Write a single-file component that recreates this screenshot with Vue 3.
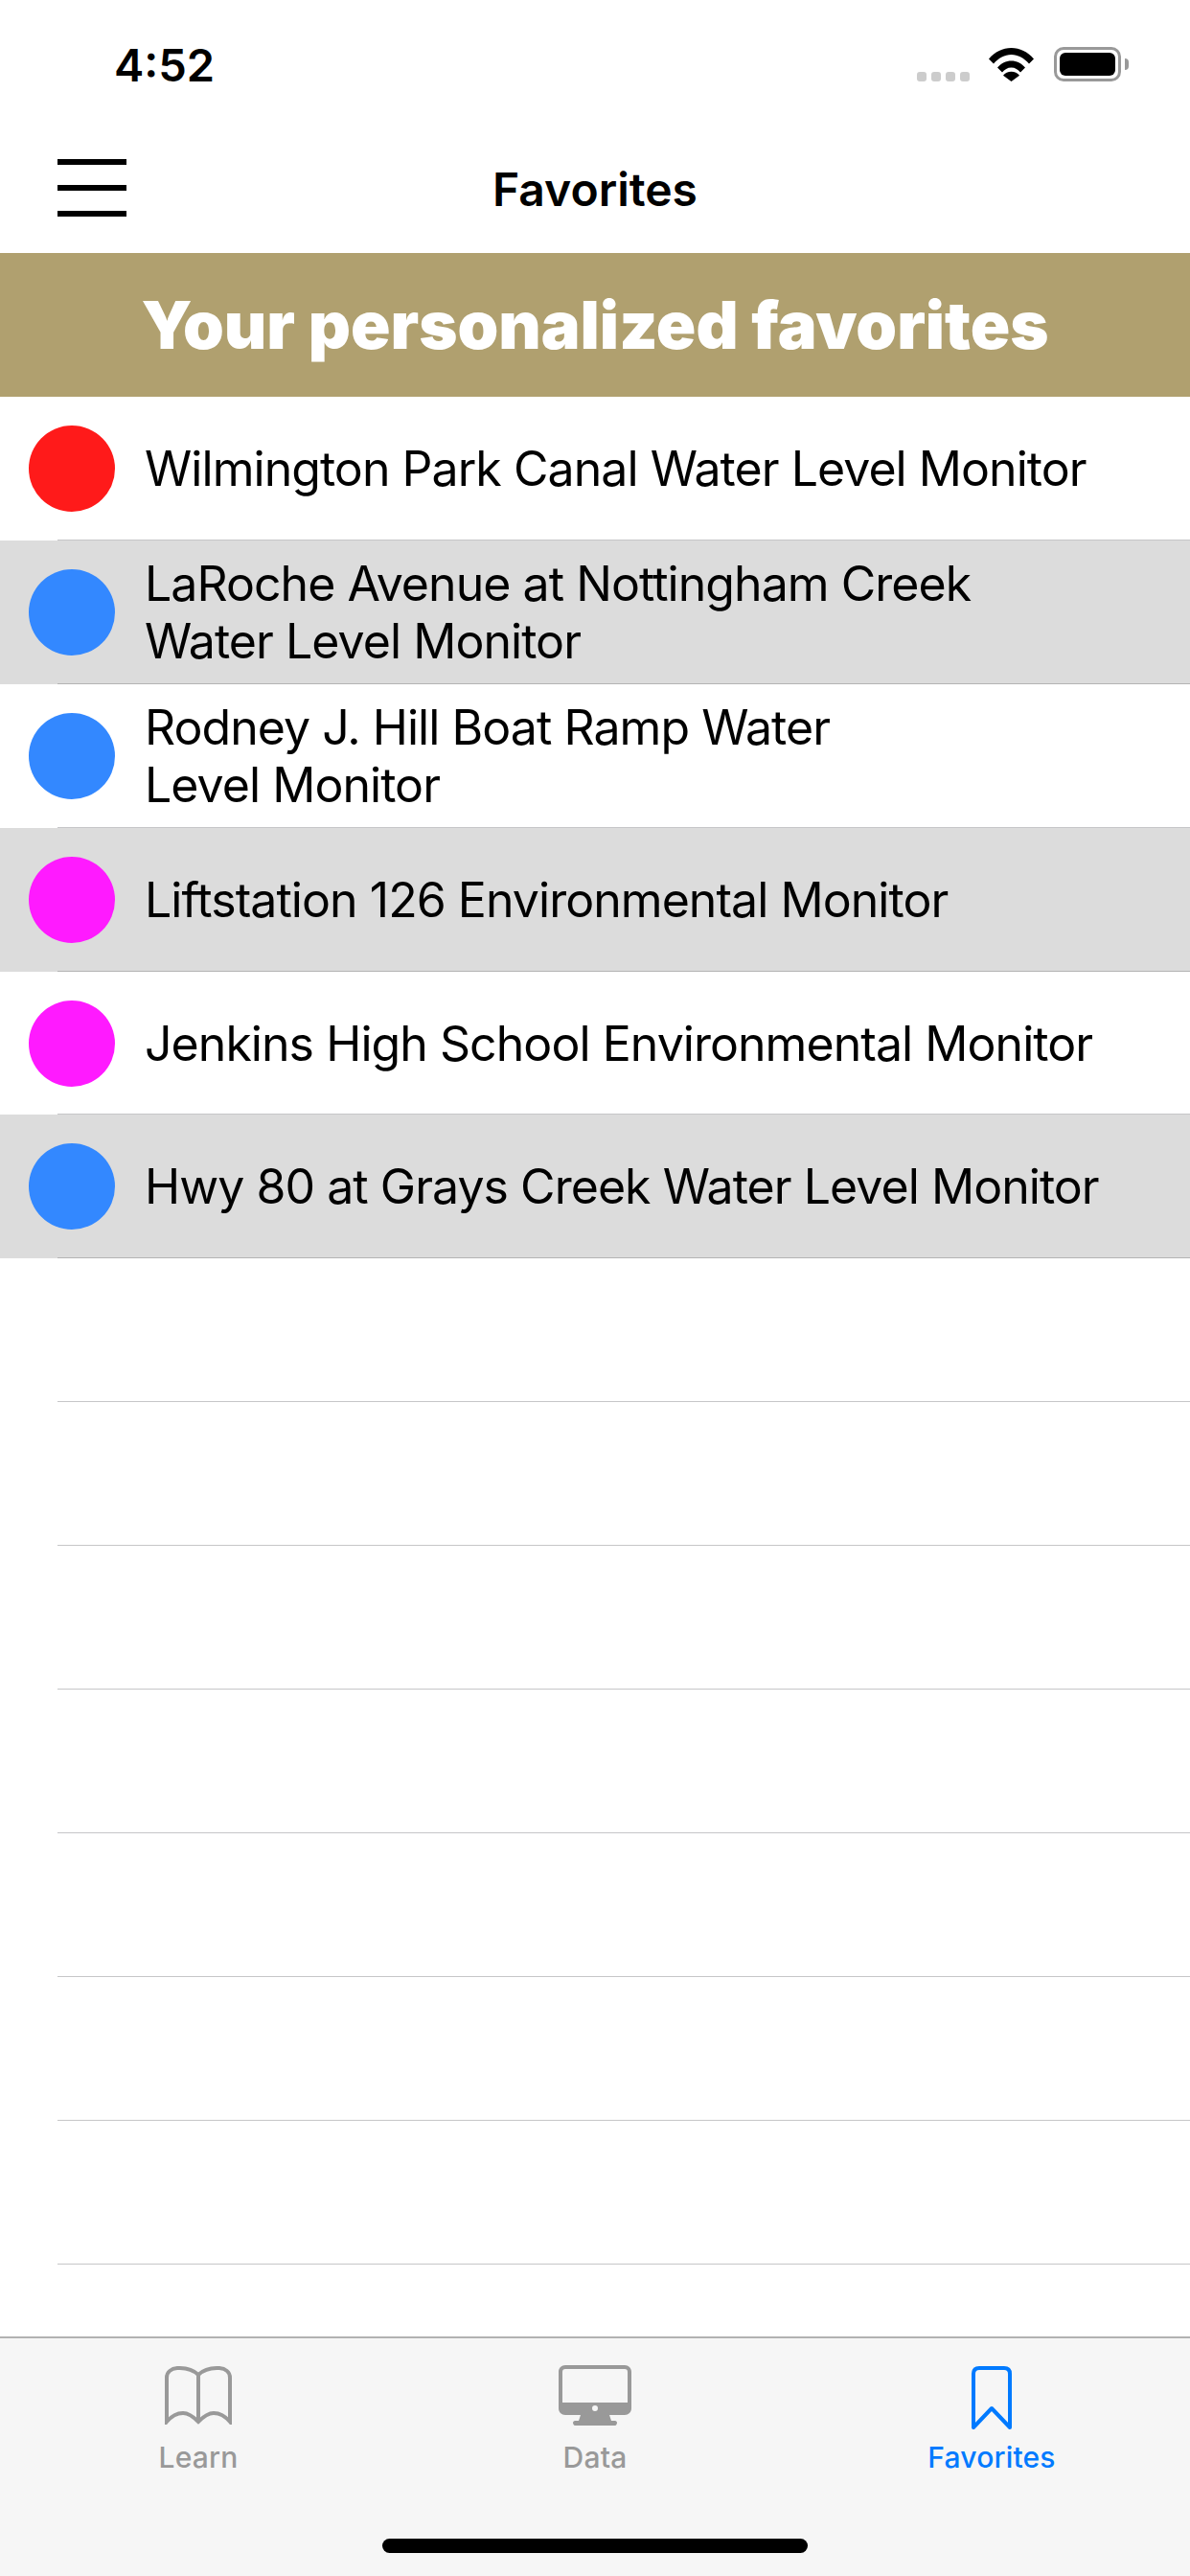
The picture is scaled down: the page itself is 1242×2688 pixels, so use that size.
<script setup>
const monitors = [
  { lines: ['Wilmington Park Canal Water Level Monitor'], color: '#ff1a1a' },
  { lines: ['LaRoche Avenue at Nottingham Creek', 'Water Level Monitor'], color: '#3388ff' },
  { lines: ['Rodney J. Hill Boat Ramp Water', 'Level Monitor'], color: '#3388ff' },
  { lines: ['Liftstation 126 Environmental Monitor'], color: '#ff1aff' },
  { lines: ['Jenkins High School Environmental Monitor'], color: '#ff1aff' },
  { lines: ['Hwy 80 at Grays Creek Water Level Monitor'], color: '#3388ff' }
]
const emptyRows = 8
</script>

<template>
  <div class="screen">
    <div class="status-bar">
      <span class="time">4:52</span>
      <div class="status-icons">
        <div class="signal"><i></i><i></i><i></i><i></i></div>
        <svg class="wifi" width="47" height="36" viewBox="0 0 47 36">
          <path d="M0 12.5C6.5 5 14.5 1 23.5 1S40.500 5 47 12.500L42 17.500C36.500 11.500 30.500 8 23.500 8S10.500 11.500 5 17.500Z" fill="#000"/>
          <path d="M9 21.500C13 17 18 14.500 23.500 14.500S34 17 38 21.500L33 26.500C30.500 23.500 27.500 21.500 23.500 21.500S16.500 23.500 14 26.500Z" fill="#000"/>
          <path d="M23.500 36L15 29.800C17 27.300 20 25.800 23.500 25.800S30 27.300 32 29.800Z" fill="#000"/>
        </svg>
        <div class="battery"><div class="battery-fill"></div></div>
      </div>
    </div>

    <div class="nav-bar">
      <div class="menu-icon"><span></span><span></span><span></span></div>
      <span class="nav-title">Favorites</span>
    </div>

    <div class="banner">Your personalized favorites</div>

    <div class="list">
      <div
        v-for="(m, i) in monitors"
        :key="i"
        class="row"
        :class="{ shaded: i % 2 === 1 }"
      >
        <span class="dot" :style="{ background: m.color }"></span>
        <div class="name">
          <span v-for="line in m.lines" :key="line" class="name-line">{{ line }}</span>
        </div>
      </div>
      <div v-for="n in emptyRows" :key="n" class="row"></div>
    </div>

    <div class="tab-bar">
      <div class="tabs">
        <div class="tab">
          <svg class="tab-icon" width="72" height="62" viewBox="0 0 72 62" fill="none" stroke="#999" stroke-width="4">
            <path d="M36 10C30 4 22 2.500 14 3C8 3.500 3 7 3 13V59C9 52 14 50 20 50C26 50 31 54 36 59C41 54 46 50 52 50C58 50 63 52 69 59V13C69 7 64 3.500 58 3C50 2.500 42 4 36 10V59"/>
          </svg>
          <span class="tab-label">Learn</span>
        </div>
        <div class="tab">
          <svg class="tab-icon" width="76" height="64" viewBox="0 0 76 64">
            <path fill-rule="evenodd" fill="#999" d="M7 0H69C73 0 76 3 76 7V45C76 49 73 52 69 52H53L55 58H59C60 58 61 59 61 60S60 63 59 63H17C16 63 15 61 15 60S16 58 17 58H21L23 52H7C3 52 0 49 0 45V7C0 3 3 0 7 0ZM7 4C5 4 4 5 4 7V39H72V7C72 5 71 4 69 4ZM38 42A3 3 0 1 0 38 48A3 3 0 1 0 38 42Z"/>
          </svg>
          <span class="tab-label">Data</span>
        </div>
        <div class="tab active">
          <svg class="tab-icon" width="44" height="68" viewBox="0 0 44 68" fill="none" stroke="#007aff" stroke-width="4">
            <path d="M3 65V9C3 5 5 3 9 3H35C39 3 41 5 41 9V65L22 45Z" stroke-linejoin="round"/>
          </svg>
          <span class="tab-label">Favorites</span>
        </div>
      </div>
      <div class="home-indicator"></div>
    </div>
  </div>
</template>

<style>
html,
body {
  margin: 0;
  background: #fff;
}
</style>

<style scoped>
.screen {
  width: 1242px;
  height: 2688px;
  display: flex;
  flex-direction: column;
  overflow: hidden;
  font-family: Inter, "Liberation Sans", sans-serif;
  color: #000;
  background: #fff;
}

.status-bar {
  height: 132px;
  flex: none;
  box-sizing: border-box;
  padding: 43px 72px 0 119px;
  display: flex;
  justify-content: space-between;
  align-items: flex-start;
}

.time {
  font-size: 47px;
  line-height: 50px;
  font-weight: 600;
}

.status-icons {
  display: flex;
  align-items: flex-start;
  padding-top: 6px;
}

.signal {
  display: flex;
  gap: 5px;
  margin-top: 26px;
  margin-right: 20px;
}

.signal i {
  width: 10px;
  height: 10px;
  border-radius: 3px;
  background: #ccc;
}

.wifi {
  margin-right: 21px;
}

.battery {
  position: relative;
  width: 70px;
  height: 36px;
  box-sizing: border-box;
  border: 3px solid #999;
  border-radius: 10px;
  padding: 3px;
}

.battery::after {
  content: "";
  position: absolute;
  right: -11px;
  top: 9px;
  width: 4px;
  height: 12px;
  background: #999;
  border-radius: 0 4px 4px 0;
}

.battery-fill {
  height: 100%;
  background: #000;
  border-radius: 6px;
}

.nav-bar {
  height: 132px;
  flex: none;
  position: relative;
  display: flex;
  align-items: center;
  justify-content: center;
}

.menu-icon {
  position: absolute;
  left: 60px;
  top: 34px;
  width: 72px;
  display: flex;
  flex-direction: column;
  gap: 21px;
}

.menu-icon span {
  height: 6px;
  background: #000;
}

.nav-title {
  font-size: 48px;
  font-weight: 600;
  line-height: 60px;
}

.banner {
  height: 150px;
  flex: none;
  display: flex;
  align-items: center;
  justify-content: center;
  background: #b0a06f;
  color: #fff;
  font-size: 68.5px;
  font-weight: 900;
}

.list {
  flex: 1;
  min-height: 0;
  overflow: hidden;
}

.row {
  height: 149.9px;
  box-sizing: border-box;
  position: relative;
  display: flex;
  align-items: center;
  padding-left: 30px;
  gap: 31px;
}

.row::after {
  content: "";
  position: absolute;
  left: 60px;
  right: 0;
  bottom: 0;
  height: 1px;
  background: #c6c6c8;
}

.row.shaded {
  background: #dcdcdc;
}

.row.shaded::after {
  background: #b4b4b4;
}

.dot {
  width: 90px;
  height: 90px;
  border-radius: 50%;
  flex: none;
}

.name {
  font-size: 50px;
  line-height: 60px;
  letter-spacing: -0.95px;
}

.name-line {
  display: block;
  white-space: nowrap;
}

.tab-bar {
  height: 250px;
  flex: none;
  box-sizing: border-box;
  background: #f6f6f6;
  border-top: 2px solid #b2b2b2;
  position: relative;
}

.tabs {
  display: grid;
  grid-template-columns: repeat(3, 1fr);
}

.tab {
  height: 150px;
  position: relative;
  display: flex;
  flex-direction: column;
  align-items: center;
  color: #999;
}

.tab-icon {
  margin-top: 28px;
}

.tab-label {
  position: absolute;
  top: 106px;
  font-size: 30px;
  line-height: 36px;
  font-weight: 500;
  letter-spacing: 0.2px;
}

.tab.active {
  color: #007aff;
}

.home-indicator {
  position: absolute;
  left: 399px;
  top: 209px;
  width: 444px;
  height: 15px;
  border-radius: 8px;
  background: #000;
}
</style>
